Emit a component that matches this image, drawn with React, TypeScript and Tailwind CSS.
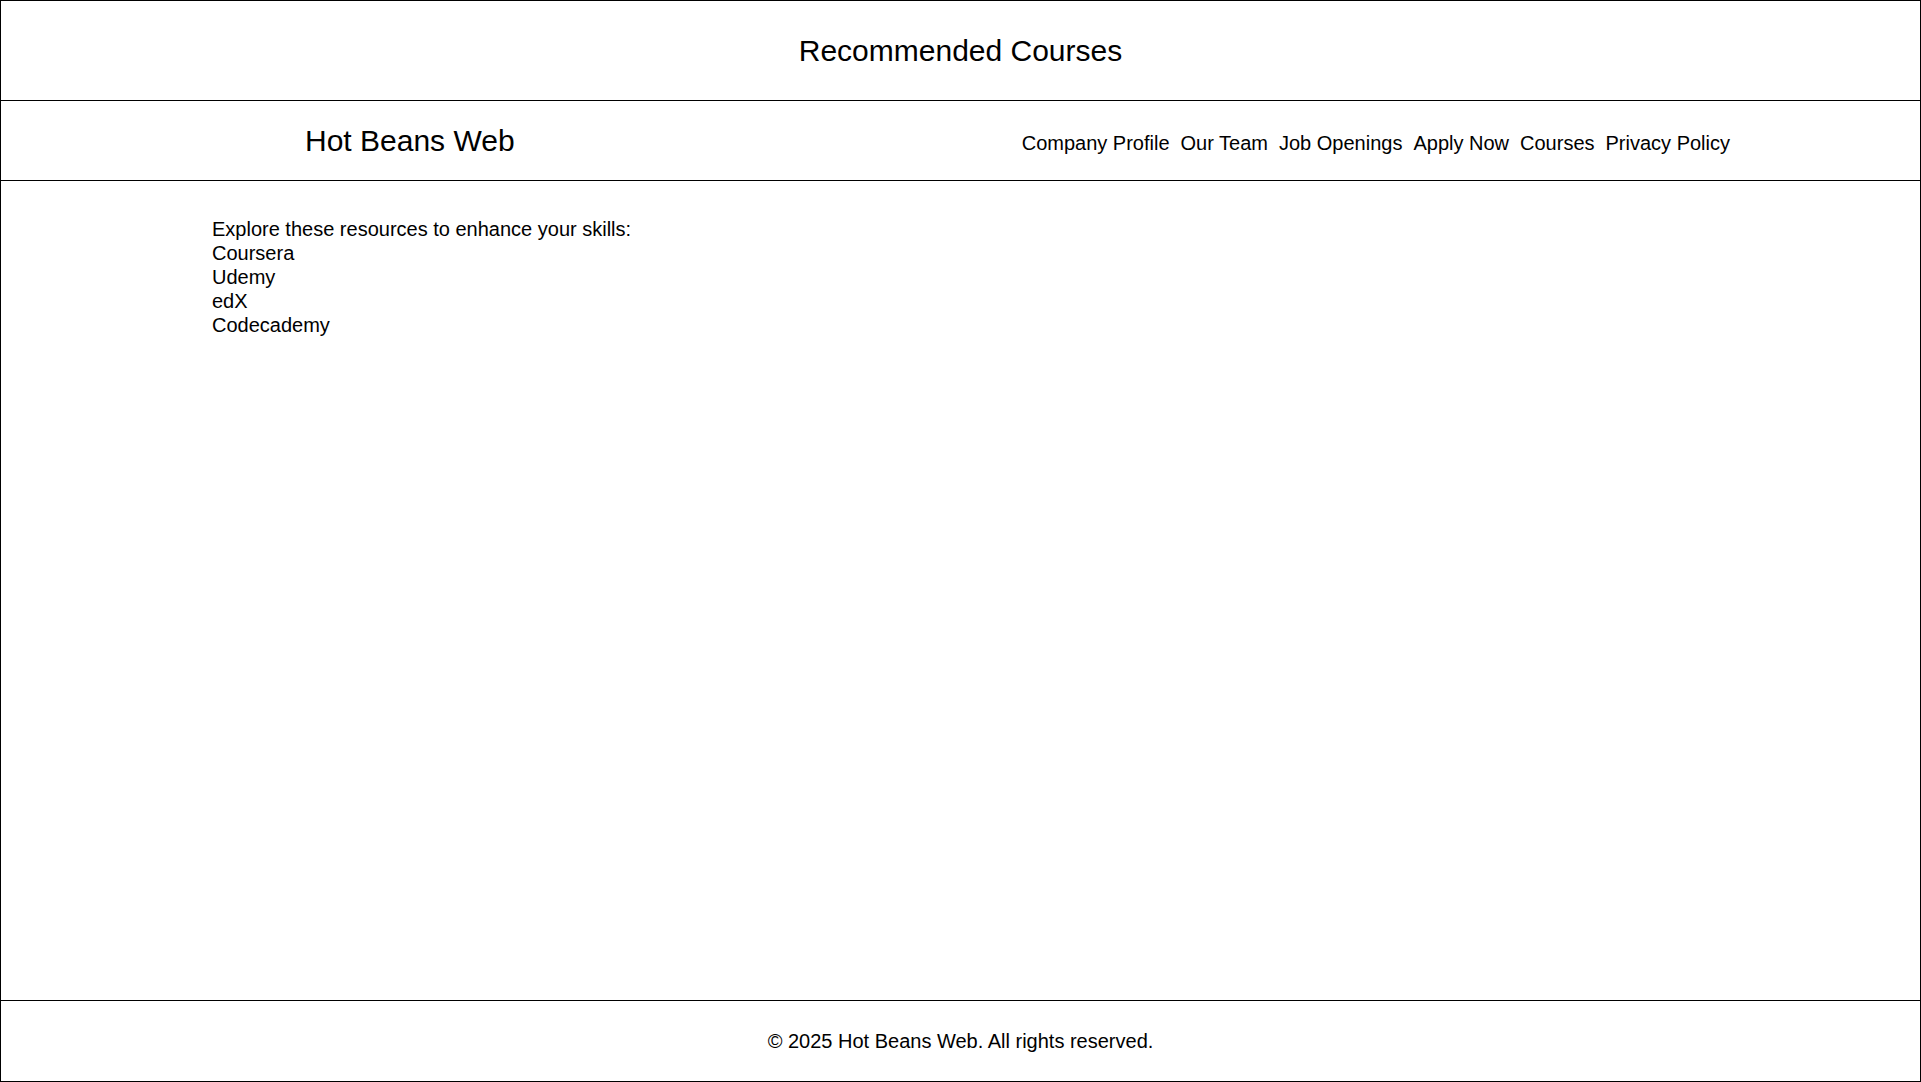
const links = ["Company Profile", "Our Team", "Job Openings", "Apply Now", "Courses", "Privacy Policy"];

const resources = ["Coursera", "Udemy", "edX", "Codecademy"];

export default function App() {
  return (
    <div className="flex h-[1082px] w-full flex-col border border-black bg-white font-['Liberation_Sans',Arial,sans-serif] text-black">
      <header className="flex h-[100px] shrink-0 items-center justify-center border-b border-black">
        <h1 className="text-[30px] leading-[34px]">Recommended Courses</h1>
      </header>

      <nav className="flex h-[80px] shrink-0 items-center justify-between border-b border-black pl-[304px] pr-[190px]">
        <div className="text-[30px] leading-[34px]">Hot Beans Web</div>
        <ul className="flex gap-[11px] pt-[4px] text-[20px] leading-[24px]">
          {links.map((l) => (
            <li key={l}>
              <a href="#">{l}</a>
            </li>
          ))}
        </ul>
      </nav>

      <main className="h-[820px] shrink-0 border-b border-black pl-[211px] pt-[36px] text-[20px] leading-[24px]">
        <p>Explore these resources to enhance your skills:</p>
        <ul>
          {resources.map((r) => (
            <li key={r}>
              <a href="#">{r}</a>
            </li>
          ))}
        </ul>
      </main>

      <footer className="flex flex-1 items-center justify-center text-[20px] leading-[24px]">
        <p>© 2025 Hot Beans Web. All rights reserved.</p>
      </footer>
    </div>
  );
}
